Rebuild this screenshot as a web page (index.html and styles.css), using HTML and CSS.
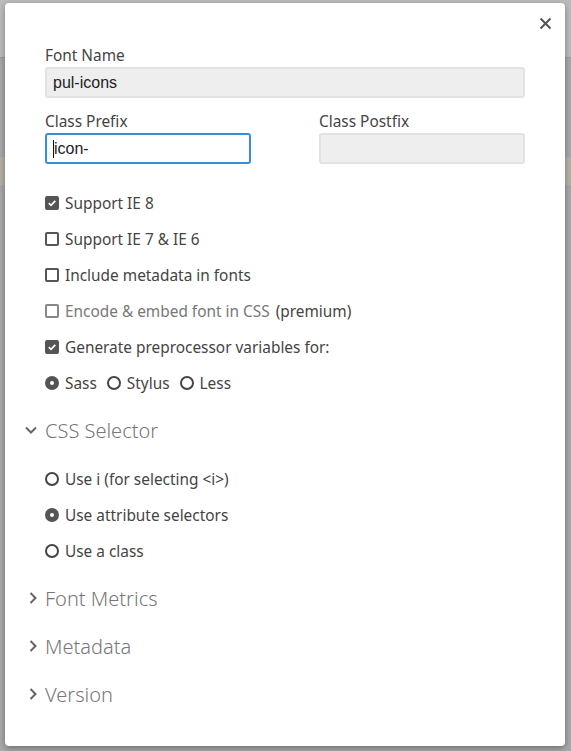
FILE: index.html
```html
<!DOCTYPE html>
<html>
<head>
<meta charset="utf-8">
<link rel="stylesheet" href="styles.css">
</head>
<body>
<div class="modal">
  <button class="close" aria-label="Close">
    <svg width="13" height="13" viewBox="0 0 13 13"><path d="M1.5 1.5 L11.5 11.5 M11.5 1.5 L1.5 11.5" stroke="#555" stroke-width="2" fill="none"/></svg>
  </button>
  <div class="field">
    <label class="lbl">Font Name</label>
    <div class="input disabled">pul-icons</div>
  </div>
  <div class="row2">
    <div class="field narrow">
      <label class="lbl">Class Prefix</label>
      <div class="input focus"><span class="caret"></span>icon-</div>
    </div>
    <div class="field narrow">
      <label class="lbl">Class Postfix</label>
      <div class="input disabled"></div>
    </div>
  </div>
  <div class="opts">
    <div class="opt"><span class="cb on"><svg width="10" height="10" viewBox="0 0 10 10"><path d="M1.8 5.2 L4 7.3 L8.3 2.8" stroke="#fff" stroke-width="1.7" fill="none"/></svg></span>Support IE 8</div>
    <div class="opt"><span class="cb"></span>Support IE 7 &amp; IE 6</div>
    <div class="opt"><span class="cb"></span>Include metadata in fonts</div>
    <div class="opt dim"><span class="cb"></span>Encode &amp; embed font in CSS <span class="prem">(premium)</span></div>
    <div class="opt"><span class="cb on"><svg width="10" height="10" viewBox="0 0 10 10"><path d="M1.8 5.2 L4 7.3 L8.3 2.8" stroke="#fff" stroke-width="1.7" fill="none"/></svg></span>Generate preprocessor variables for:</div>
    <div class="opt radios">
      <span class="ritem"><span class="rb on"></span>Sass</span>
      <span class="ritem"><span class="rb"></span>Stylus</span>
      <span class="ritem"><span class="rb"></span>Less</span>
    </div>
  </div>
  <div class="sec open">
    <svg class="chev" width="12" height="8" viewBox="0 0 12 8"><path d="M1 1.5 L6 6.5 L11 1.5" stroke="#666" stroke-width="2" fill="none"/></svg>
    <span>CSS Selector</span>
  </div>
  <div class="opts sel">
    <div class="opt"><span class="rb"></span>Use i (for selecting &lt;i&gt;)</div>
    <div class="opt"><span class="rb on"></span>Use attribute selectors</div>
    <div class="opt"><span class="rb"></span>Use a class</div>
  </div>
  <div class="sec">
    <svg class="chev r" width="8" height="12" viewBox="0 0 8 12"><path d="M1.5 1 L6.5 6 L1.5 11" stroke="#666" stroke-width="2" fill="none"/></svg>
    <span>Font Metrics</span>
  </div>
  <div class="sec">
    <svg class="chev r" width="8" height="12" viewBox="0 0 8 12"><path d="M1.5 1 L6.5 6 L1.5 11" stroke="#666" stroke-width="2" fill="none"/></svg>
    <span>Metadata</span>
  </div>
  <div class="sec">
    <svg class="chev r" width="8" height="12" viewBox="0 0 8 12"><path d="M1.5 1 L6.5 6 L1.5 11" stroke="#666" stroke-width="2" fill="none"/></svg>
    <span>Version</span>
  </div>
</div>
</body>
</html>
```
FILE: styles.css
```css
html, body { margin: 0; padding: 0; }
body {
  width: 571px;
  height: 751px;
  overflow: hidden;
  font-family: "Noto Sans", "DejaVu Sans", sans-serif;
  color: #444;
  background: linear-gradient(to bottom,
    #bcbcbc 0, #bcbcbc 57px,
    #9a9a9a 57px, #9a9a9a 58px,
    #a8a8a8 58px, #a8a8a8 157px,
    #b6b0a8 157px, #b6b0a8 185px,
    #a8a8a8 185px);
  padding: 3px 0 0 5px;
  box-sizing: border-box;
}
.modal {
  position: relative;
  width: 560px;
  height: 743px;
  background: #fff;
  border-radius: 4px;
  box-shadow: 0 2px 6px rgba(0,0,0,0.35);
  box-sizing: border-box;
  padding: 43px 40px 0 40px;
}
.close {
  position: absolute;
  right: 13px;
  top: 14px;
  border: 0;
  background: none;
  padding: 0;
  width: 13px;
  height: 13px;
  display: block;
}
.close svg { display: block; }
.field { display: flex; flex-direction: column; }
.lbl {
  font-size: 15.4px;
  line-height: 20px;
  color: #444;
  margin-bottom: 1px;
}
.input {
  height: 31px;
  box-sizing: border-box;
  border: 2px solid #e2e2e2;
  background: #eee;
  border-radius: 3px;
  font-family: "Liberation Sans", Arial, sans-serif;
  font-size: 16px;
  color: #222;
  padding: 0 6px;
  display: flex;
  align-items: center;
}
.input.focus {
  background: #fff;
  border-color: #3a8ed3;
}
.caret {
  display: inline-block;
  width: 1px;
  height: 18px;
  background: #111;
}
.row2 {
  display: flex;
  justify-content: space-between;
  margin-top: 14px;
}
.narrow { width: 206px; }
.opts { margin-top: 21px; display: flex; flex-direction: column; }
.opt {
  height: 36px;
  display: flex;
  align-items: center;
  font-size: 15.4px;
  color: #444;
}
.opt.dim { color: #777; }
.opt.dim .cb { border-color: #888; }
.prem { color: #444; margin-left: 6px; }
.cb {
  width: 14px;
  height: 14px;
  box-sizing: border-box;
  border: 2px solid #555;
  border-radius: 2px;
  margin-right: 6px;
  display: flex;
  align-items: center;
  justify-content: center;
  flex: none;
}
.cb.on { background: #555; }
.cb svg { display: block; }
.rb {
  width: 14px;
  height: 14px;
  box-sizing: border-box;
  border: 2px solid #444;
  border-radius: 50%;
  margin-right: 6px;
  flex: none;
  display: flex;
  align-items: center;
  justify-content: center;
}
.rb.on { background: #555; border-color: #555; }
.rb.on::after {
  content: "";
  width: 4px;
  height: 4px;
  border-radius: 50%;
  background: #fff;
}
.radios { gap: 10px; }
.ritem { display: flex; align-items: center; }
.sec {
  display: flex;
  align-items: center;
  height: 48px;
  margin-left: -20px;
  font-size: 20px;
  font-weight: 300;
  color: #777;
}
.sec .chev { margin-right: 8px; }
.sec .chev.r { margin-left: 4px; margin-right: 8px; }
.sec.open { margin-top: 5px; }
.opts.sel { margin-top: 7px; margin-bottom: 5px; }
```
